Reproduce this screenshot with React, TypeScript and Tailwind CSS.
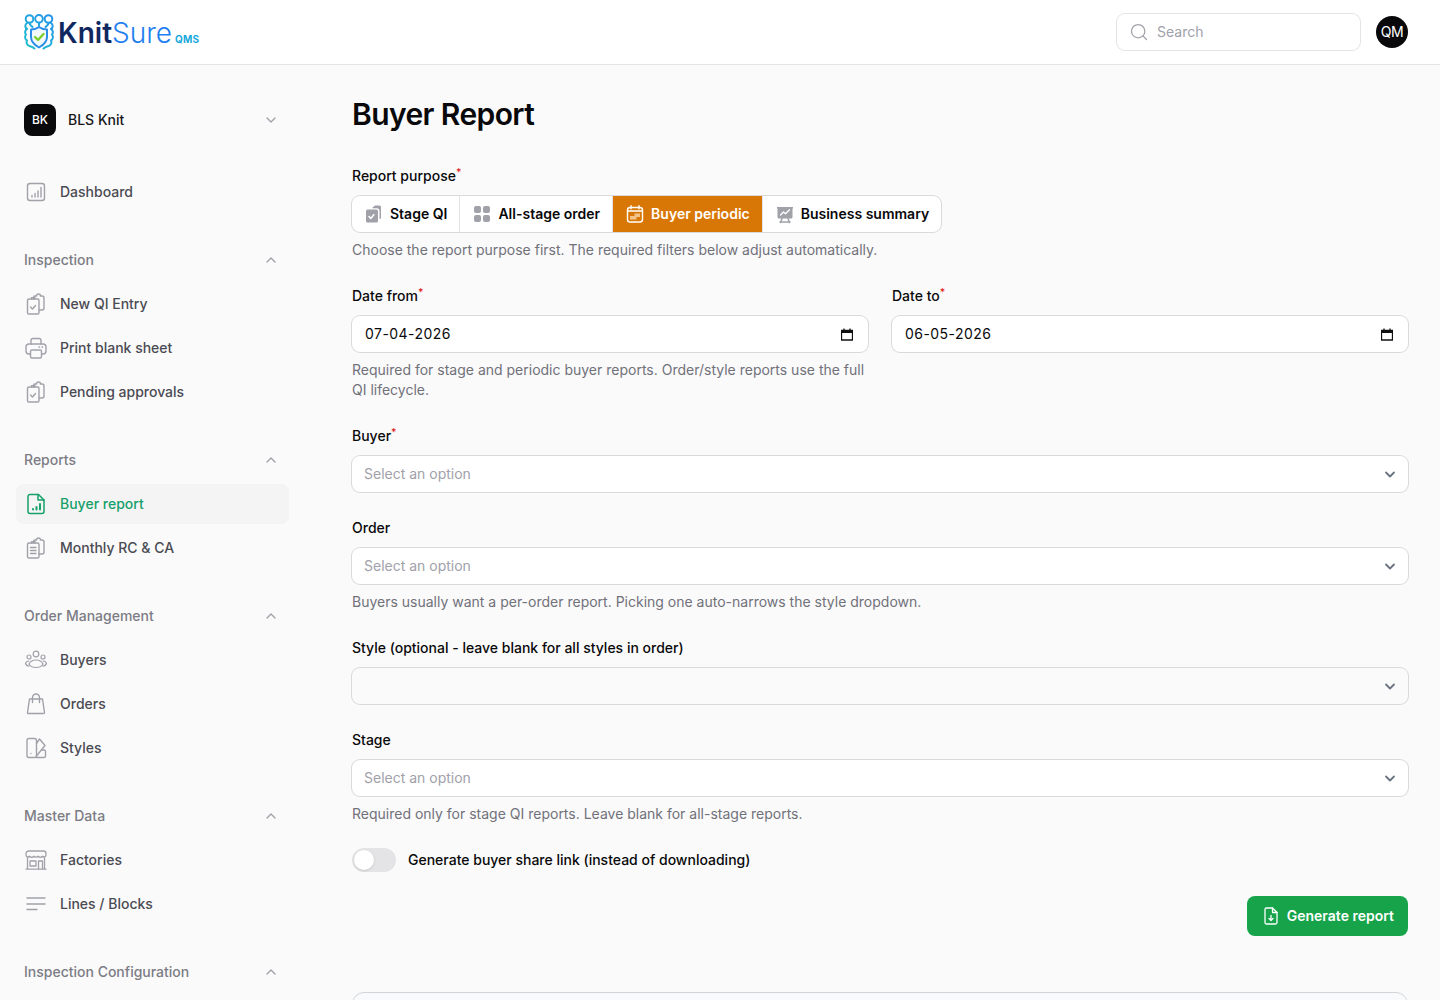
import { ChevronDown, ChevronUp, Search } from "lucide-react";
import type { ReactNode } from "react";

const iconProps = {
  width: 24,
  height: 24,
  viewBox: "0 0 24 24",
  fill: "none",
  stroke: "currentColor",
  strokeWidth: 1.4,
  strokeLinecap: "round" as const,
  strokeLinejoin: "round" as const,
};

function DashboardIcon() {
  return (
    <svg {...iconProps}>
      <rect x="3.5" y="3.5" width="17" height="17" rx="2.5" />
      <path d="M8 17v-1.5M11 17v-3.5M14 17v-6M17 17V7.5" />
    </svg>
  );
}

function ClipboardsIcon({ list }: { list?: boolean }) {
  return (
    <svg {...iconProps}>
      <path d="M9.500 7V5.500A1.500 1.500 0 0 1 11 4h1.500a2 2 0 0 1 4 0H18a2 2 0 0 1 2 2v10a2 2 0 0 1-2 2h-3" />
      <rect x="3.500" y="7" width="11.500" height="15" rx="1.500" />
      <path d="M7.500 7V5.800h3.500V7" />
      {list ? (
        <path d="M6.500 11.500h5.500M6.500 14.500h5.500M6.500 17.500h5.500" />
      ) : (
        <path d="m6.500 15 2 2 3-3.500" />
      )}
    </svg>
  );
}

function PrinterIcon() {
  return (
    <svg {...iconProps}>
      <path d="M7 8V4.500A2 2 0 0 1 9 2.500h6a2 2 0 0 1 2 2V8" />
      <path d="M6.500 18H5a3 3 0 0 1-3-3v-4a3 3 0 0 1 3-3h14a3 3 0 0 1 3 3v4a3 3 0 0 1-3 3h-1.500" />
      <rect x="6.500" y="14" width="11" height="8" rx="1.500" />
      <path d="M15 11h.5M18 11h.5" />
    </svg>
  );
}

function ReportFileIcon() {
  return (
    <svg {...iconProps} strokeWidth={1.5}>
      <path d="M6 2.500h8.500L20 8v11.500a2 2 0 0 1-2 2H6a2 2 0 0 1-2-2v-15a2 2 0 0 1 2-2Z" />
      <path d="M14 2.500V8h6" />
      <path d="M9 17.500v-.5M12.500 17.500v-2.500M16 17.500V12" strokeWidth={2} />
    </svg>
  );
}

function BuyersIcon() {
  return (
    <svg {...iconProps} strokeWidth={1.2}>
      <circle cx="12" cy="6" r="2.800" />
      <circle cx="5" cy="9" r="2" />
      <circle cx="19" cy="9" r="2" />
      <path d="M12 12c3.500 0 6 2 7 4-1 2-3.500 3.500-7 3.500S6 18 5 16c1-2 3.500-4 7-4Z" />
      <path d="M5 13c-1.500 0-3 1-3.500 2.500C2 17 3.500 18 5 18M19 13c1.500 0 3 1 3.500 2.500-.5 1.500-2 2.500-3.500 2.500" />
    </svg>
  );
}

function BagIcon() {
  return (
    <svg {...iconProps}>
      <path d="M5.500 7.500h13L20.500 21a1 1 0 0 1-1 1h-15a1 1 0 0 1-1-1Z" transform="translate(0 -.5)" />
      <path d="M8.500 10.500V5.500a3.500 3.500 0 0 1 7 0v5" />
    </svg>
  );
}

function StylesIcon() {
  return (
    <svg {...iconProps}>
      <rect x="3" y="2.500" width="9.500" height="19" rx="2" />
      <path d="M12.500 7.500 15.500 3l5.500 6.500-8.500 10.500" />
      <path d="M12.500 21.500H20a1.500 1.500 0 0 0 1.500-1.500v-4.500a1.500 1.500 0 0 0-1.500-1.500h-2.500" />
      <path d="M7 17.500h.01" />
    </svg>
  );
}

function FactoryIcon() {
  return (
    <svg {...iconProps} strokeWidth={1.3}>
      <path d="M4.500 3h15a2.500 2.500 0 0 1 2.500 2.500V7a2 2 0 0 1-3.500 1.300 3 3 0 0 1-4.500 0 3 3 0 0 1-4 0 3 3 0 0 1-4.500 0A2 2 0 0 1 2 7V5.500A2.500 2.500 0 0 1 4.500 3Z" />
      <path d="M3.500 9.500V21M20.500 9.500V21M2 21.200h20" />
      <rect x="6" y="13" width="6" height="5" />
      <path d="M14.500 21v-8h4v8" />
    </svg>
  );
}

function LinesIcon() {
  return (
    <svg {...iconProps}>
      <path d="M3 6h18M3 12h18M3 17.500h10" />
    </svg>
  );
}

function LogoMark() {
  return (
    <svg width="30" height="36" viewBox="0 0 30 36" fill="none" strokeLinecap="round" strokeLinejoin="round">
      <defs>
        <linearGradient id="knit" x1="0" y1="36" x2="30" y2="0" gradientUnits="userSpaceOnUse">
          <stop offset="0" stopColor="#1fc4c9" />
          <stop offset="1" stopColor="#2590ee" />
        </linearGradient>
      </defs>
      <g stroke="url(#knit)" strokeWidth="2">
        <circle cx="5.500" cy="5" r="3.800" />
        <circle cx="15" cy="4.800" r="3.800" />
        <circle cx="24.500" cy="5" r="3.800" />
        <path d="M5.500 9c0 2 1.500 2.500 3 4M15 8.800v3M24.500 9c0 2-1.500 2.500-3 4" />
        <path d="M3 9C.5 11 1 14 3 15c-2 1-2.500 4-1 5.500-1.500 2-1 5 1 6-1 2 0 5 2.500 5.500 2 .5 3.500 1 5 2.500" />
        <path d="M27 9c2.500 2 2 5 0 6 2 1 2.500 4 1 5.500 1.500 2 1 5-1 6 1 2 0 5-2.500 5.500-2 .5-3.500 1-5 2.500" />
      </g>
      <path d="M15 13c2.500 1.800 5.500 2.600 8 2.600v7.400c0 5-3.500 8-8 10.500-4.500-2.500-8-5.500-8-10.500v-7.400c2.500 0 5.500-.8 8-2.600Z" fill="#f2f9fe" stroke="#2a8de8" strokeWidth="2" />
      <path d="m11 23 3 3 5.500-6" stroke="#7ccf2a" strokeWidth="2.400" />
    </svg>
  );
}

function Logo() {
  return (
    <div className="flex items-center gap-1">
      <LogoMark />
      <div className="mt-0.5 flex items-baseline">
        <span className="text-[28px] leading-9 font-semibold text-[#10285f]">Knit</span>
        <span className="text-[28px] leading-9 font-light text-[#1f7ff0]">Sure</span>
        <span className="ml-[3px] text-[10px] leading-3 font-bold tracking-[0.2px] text-[#18a9dc]">QMS</span>
      </div>
    </div>
  );
}

type NavItem = { label: string; icon: ReactNode; active?: boolean };

const sections: { title: string; items: NavItem[] }[] = [
  {
    title: "Inspection",
    items: [
      { label: "New QI Entry", icon: <ClipboardsIcon /> },
      { label: "Print blank sheet", icon: <PrinterIcon /> },
      { label: "Pending approvals", icon: <ClipboardsIcon /> },
    ],
  },
  {
    title: "Reports",
    items: [
      { label: "Buyer report", icon: <ReportFileIcon />, active: true },
      { label: "Monthly RC & CA", icon: <ClipboardsIcon list /> },
    ],
  },
  {
    title: "Order Management",
    items: [
      { label: "Buyers", icon: <BuyersIcon /> },
      { label: "Orders", icon: <BagIcon /> },
      { label: "Styles", icon: <StylesIcon /> },
    ],
  },
  {
    title: "Master Data",
    items: [
      { label: "Factories", icon: <FactoryIcon /> },
      { label: "Lines / Blocks", icon: <LinesIcon /> },
    ],
  },
  { title: "Inspection Configuration", items: [] },
];

function NavLink({ item }: { item: NavItem }) {
  return (
    <div className={`flex h-10 items-center gap-3 rounded-lg pl-2 ${item.active ? "bg-[#f4f4f5]" : ""}`}>
      <span className={`flex w-6 justify-center ${item.active ? "text-[#16a06a]" : "text-[#a1a1aa]"}`}>{item.icon}</span>
      <span className={`text-sm font-medium ${item.active ? "text-[#16a06a]" : "text-[#4b4b53]"}`}>{item.label}</span>
    </div>
  );
}

function Sidebar() {
  return (
    <aside className="w-[305px] shrink-0 px-4 pt-[39px]">
      <div className="flex h-8 items-center pl-2 pr-[10px]">
        <span className="flex size-8 items-center justify-center rounded-lg bg-[#09090b] text-xs font-medium text-white">BK</span>
        <span className="ml-3 flex-1 text-sm font-medium text-[#18181b]">BLS Knit</span>
        <ChevronDown size={16} className="text-[#a1a1aa]" />
      </div>
      <div className="mt-9">
        <NavLink item={{ label: "Dashboard", icon: <DashboardIcon /> }} />
      </div>
      <nav className="mt-7 flex flex-col gap-7">
        {sections.map((section) => (
          <div key={section.title} className="flex flex-col gap-1">
            <div className="flex h-10 items-center justify-between pl-2 pr-[10px]">
              <span className="text-sm font-medium text-[#7c7c85]">{section.title}</span>
              <ChevronUp size={16} className="text-[#a1a1aa]" />
            </div>
            {section.items.map((item) => (
              <NavLink key={item.label} item={item} />
            ))}
          </div>
        ))}
      </nav>
    </aside>
  );
}

function FieldLabel({ children, required }: { children: ReactNode; required?: boolean }) {
  return (
    <div className="text-sm leading-5 font-medium text-[#09090b]">
      {children}
      {required && <sup className="text-[#dc2626] font-medium">*</sup>}
    </div>
  );
}

function Help({ children }: { children: ReactNode }) {
  return <p className="mt-2 text-sm leading-5 text-[#71717a]">{children}</p>;
}

function SelectBox({ placeholder, plain }: { placeholder?: string; plain?: boolean }) {
  return (
    <div className={`mt-[10px] flex h-9 items-center justify-between rounded-lg pl-3 pr-[8px] ring-1 ring-[#d9d9de] ${plain ? "" : "bg-white"}`}>
      <span className="text-sm text-[#a1a1aa]">{placeholder}</span>
      <svg width="20" height="20" viewBox="0 0 20 20" fill="none" stroke="#6b7280" strokeWidth="1.800" strokeLinecap="round" strokeLinejoin="round">
        <path d="m6 8.500 4 4 4-4" />
      </svg>
    </div>
  );
}

function CalendarGlyph() {
  return (
    <svg width="12" height="13" viewBox="0 0 12 13" fill="none">
      <path d="M.5 2.500h11V12H.5Z" stroke="#111" strokeWidth="1.300" />
      <path d="M.5 2h11v3H.5Z" fill="#111" />
      <path d="M3 .5v2M9 .5v2" stroke="#111" strokeWidth="1.300" />
    </svg>
  );
}

function DateBox({ value }: { value: string }) {
  return (
    <div className="mt-[10px] flex h-9 items-center justify-between rounded-lg bg-white pl-[13px] pr-[15px] ring-1 ring-[#d9d9de]">
      <span className="text-sm tracking-[0.45px] text-[#09090b]">{value}</span>
      <CalendarGlyph />
    </div>
  );
}

function StageIcon() {
  return (
    <svg width="20" height="20" viewBox="0 0 20 20" fill="#a1a1aa">
      <path d="M8.500 4.200V3.500L11 1.500h4.500A1.500 1.500 0 0 1 17 3v10.500a1.500 1.500 0 0 1-1.500 1.500v-8a2.800 2.800 0 0 0-2.800-2.800Z" />
      <rect x="2" y="5.500" width="12" height="13" rx="1.500" />
      <path d="m5 12.500 1.800 2 3-3.800" fill="none" stroke="#fff" strokeWidth="1.500" strokeLinecap="round" strokeLinejoin="round" />
    </svg>
  );
}

function GridIcon() {
  return (
    <svg width="20" height="20" viewBox="0 0 20 20" fill="#a1a1aa">
      <rect x="2" y="2" width="7" height="7" rx="2" />
      <rect x="11" y="2" width="7" height="7" rx="2" />
      <rect x="2" y="11" width="7" height="7" rx="2" />
      <rect x="11" y="11" width="7" height="7" rx="2" />
    </svg>
  );
}

function PeriodicIcon() {
  return (
    <svg width="20" height="20" viewBox="0 0 20 20" fill="none" stroke="#fff" strokeWidth="1.400" strokeLinecap="round">
      <rect x="2.500" y="3.500" width="15" height="14.500" rx="2.500" />
      <path d="M6 1.800v3M14 1.800v3M2.500 7h15" />
      <path d="M9.500 9.500h5.500V13H11.500v2.500H5V12h4.500Z" fill="#f3c48a" stroke="none" />
    </svg>
  );
}

function SummaryIcon() {
  return (
    <svg width="20" height="20" viewBox="0 0 20 20" fill="#a1a1aa">
      <path d="M2 3h16v1.500h-.5V13a1.500 1.500 0 0 1-1.500 1.500H4A1.500 1.500 0 0 1 2.500 13V4.500H2Z" />
      <path d="m5.500 11 3-3 2 1.800 4-4" fill="none" stroke="#fff" strokeWidth="1.300" strokeLinecap="round" strokeLinejoin="round" />
      <path d="M5.500 18.500 7 14.500M14.500 18.500 13 14.500M5 18h10" fill="none" stroke="#a1a1aa" strokeWidth="1.500" strokeLinecap="round" />
    </svg>
  );
}

const purposes: { label: string; icon: ReactNode; active?: boolean }[] = [
  { label: "Stage QI", icon: <StageIcon /> },
  { label: "All-stage order", icon: <GridIcon /> },
  { label: "Buyer periodic", icon: <PeriodicIcon />, active: true },
  { label: "Business summary", icon: <SummaryIcon /> },
];

function GenerateIcon() {
  return (
    <svg width="20" height="20" viewBox="0 0 20 20" fill="none" stroke="#fff" strokeWidth="1.300" strokeLinecap="round" strokeLinejoin="round">
      <path d="M5.500 2h6L16 6.500V16.500A1.500 1.500 0 0 1 14.500 18h-9A1.500 1.500 0 0 1 4 16.500v-13A1.500 1.500 0 0 1 5.500 2Z" />
      <path d="M11.500 2v4.500H16" />
      <path d="M10 9.500v5M8 12.500l2 2 2-2" />
    </svg>
  );
}

function ReportForm() {
  return (
    <main className="min-w-0 flex-1 pl-[47px] pr-8 pt-[31px]">
      <h1 className="text-3xl leading-9 font-semibold tracking-[-0.6px] text-[#09090b]">Buyer Report</h1>

      <div className="mt-[34px]">
        <FieldLabel required>Report purpose</FieldLabel>
        <div className="mt-[10px] inline-flex h-9 divide-x divide-[#e4e4e7] overflow-hidden rounded-lg bg-white align-top ring-1 ring-[#d9d9de]">
          {purposes.map((p) => (
            <div
              key={p.label}
              className={`flex items-center gap-1.5 px-3 text-sm font-semibold ${p.active ? "bg-[#d97706] text-white" : "text-[#09090b]"}`}
            >
              {p.icon}
              {p.label}
            </div>
          ))}
        </div>
        <Help>Choose the report purpose first. The required filters below adjust automatically.</Help>
      </div>

      <div className="mt-[26px] grid grid-cols-2 gap-6">
        <div>
          <FieldLabel required>Date from</FieldLabel>
          <DateBox value="07-04-2026" />
          <Help>Required for stage and periodic buyer reports. Order/style reports use the full QI lifecycle.</Help>
        </div>
        <div>
          <FieldLabel required>Date to</FieldLabel>
          <DateBox value="06-05-2026" />
        </div>
      </div>

      <div className="mt-[26px]">
        <FieldLabel required>Buyer</FieldLabel>
        <SelectBox placeholder="Select an option" />
      </div>

      <div className="mt-[26px]">
        <FieldLabel>Order</FieldLabel>
        <SelectBox placeholder="Select an option" />
        <Help>Buyers usually want a per-order report. Picking one auto-narrows the style dropdown.</Help>
      </div>

      <div className="mt-[26px]">
        <FieldLabel>Style (optional - leave blank for all styles in order)</FieldLabel>
        <SelectBox plain />
      </div>

      <div className="mt-[26px]">
        <FieldLabel>Stage</FieldLabel>
        <SelectBox placeholder="Select an option" />
        <Help>Required only for stage QI reports. Leave blank for all-stage reports.</Help>
      </div>

      <div className="mt-6 flex h-6 items-center gap-3">
        <div className="flex h-6 w-11 items-center rounded-full bg-[#e4e4e7] px-0.5">
          <span className="size-5 rounded-full bg-white shadow" />
        </div>
        <span className="text-sm font-medium text-[#09090b]">Generate buyer share link (instead of downloading)</span>
      </div>

      <div className="mt-6 flex justify-end">
        <button className="flex h-10 items-center gap-1.5 rounded-lg bg-[#16a34a] px-3.5 text-sm font-semibold text-white">
          <GenerateIcon />
          Generate report
        </button>
      </div>

      <div className="mt-14 h-40 rounded-xl border border-[#d4d4d8] bg-[#f8fafc]" />
    </main>
  );
}

export default function App() {
  return (
    <div className="flex h-[1000px] flex-col overflow-hidden bg-[#fafafa] font-['Inter',sans-serif]">
      <header className="flex h-[65px] shrink-0 items-center justify-between border-b border-[#e4e4e7] bg-white pl-6 pr-8">
        <Logo />
        <div className="flex items-center gap-4">
          <div className="flex h-9 w-[243px] items-center gap-2 rounded-lg bg-white pl-3 ring-1 ring-[#e4e4e7]">
            <Search size={20} strokeWidth={1.5} className="text-[#a1a1aa]" />
            <span className="text-sm text-[#a1a1aa]">Search</span>
          </div>
          <span className="flex size-8 items-center justify-center rounded-full bg-[#09090b] text-sm tracking-tight text-white">QM</span>
        </div>
      </header>
      <div className="flex min-h-0 flex-1">
        <Sidebar />
        <ReportForm />
      </div>
    </div>
  );
}
